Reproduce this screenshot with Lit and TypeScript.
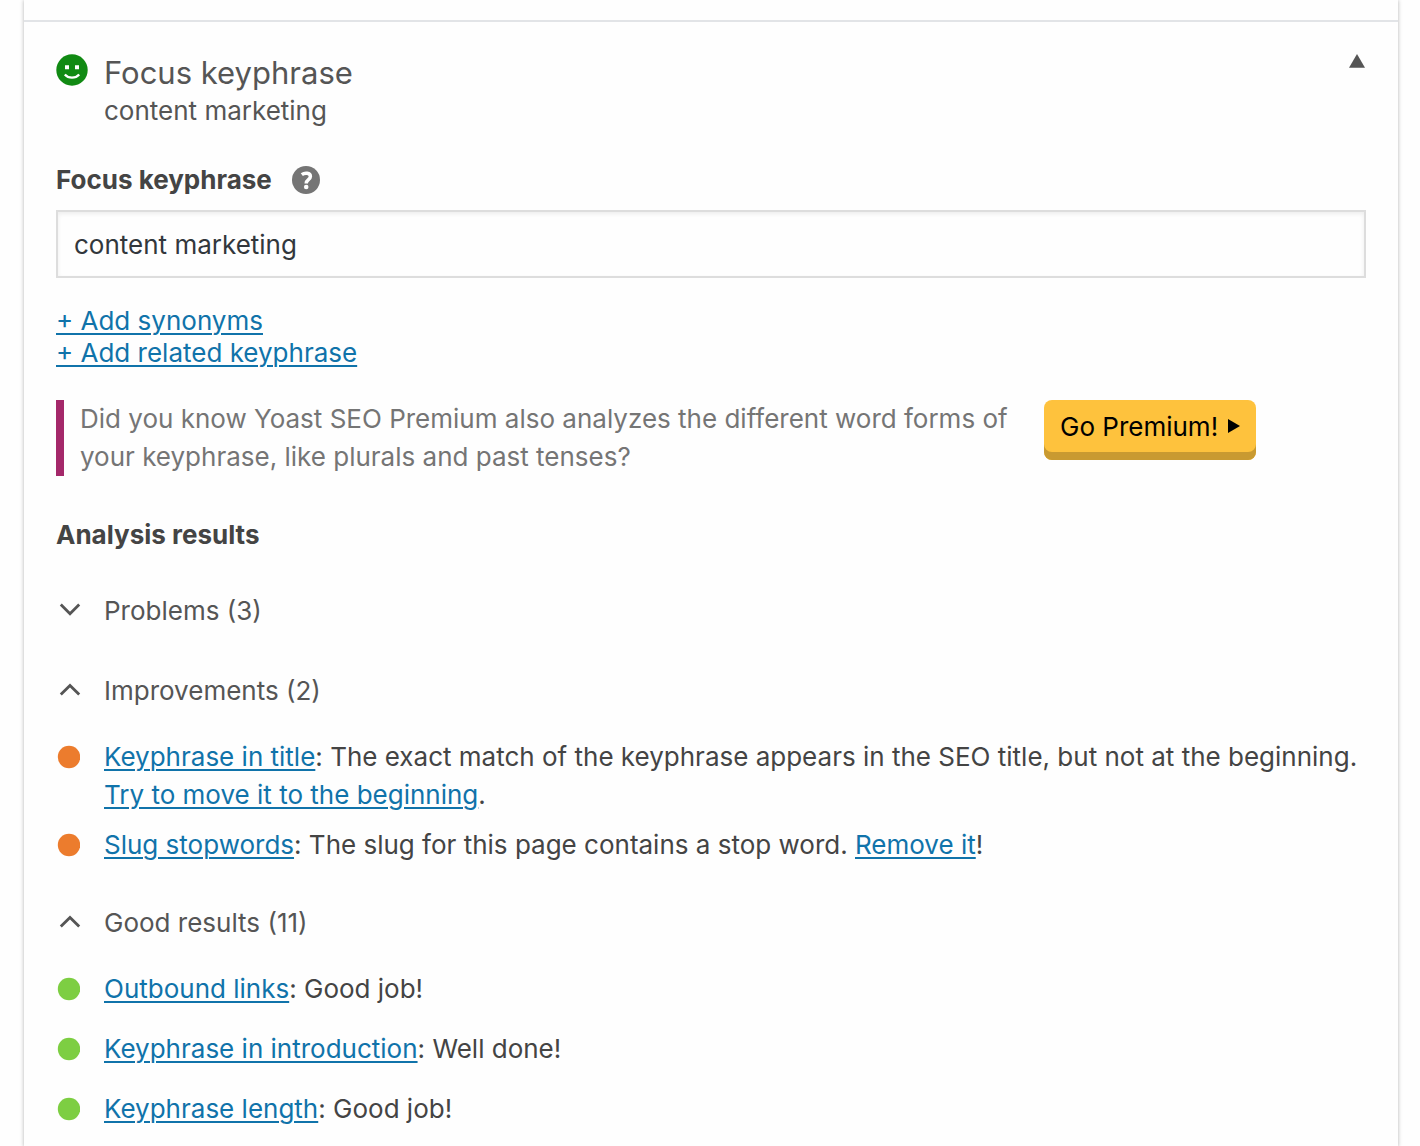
import { LitElement, html, css, svg, type TemplateResult } from "lit";
import { customElement, property, state } from "lit/decorators.js";
import { classMap } from "lit/directives/class-map.js";

interface Result {
  name: string;
  text: string;
  action?: string;
  end?: string;
}

const IMPROVEMENTS: Result[] = [
  {
    name: "Keyphrase in title",
    text: "The exact match of the keyphrase appears in the SEO title, but not at the beginning.",
    action: "Try to move it to the beginning",
    end: ".",
  },
  {
    name: "Slug stopwords",
    text: "The slug for this page contains a stop word.",
    action: "Remove it",
    end: "!",
  },
];

const GOOD: Result[] = [
  { name: "Outbound links", text: "Good job!" },
  { name: "Keyphrase in introduction", text: "Well done!" },
  { name: "Keyphrase length", text: "Good job!" },
];

const base = css`
  :host {
    display: block;
  }
  * {
    box-sizing: border-box;
  }
  button {
    margin: 0;
    padding: 0;
    border: 0;
    background: none;
    color: inherit;
    font: inherit;
    text-align: left;
    cursor: pointer;
  }
  a {
    color: #1073aa;
    text-decoration: underline;
    text-decoration-thickness: 2px;
    text-underline-offset: 3px;
  }
  ul {
    margin: 0;
    padding: 0;
    list-style: none;
  }
`;

@customElement("result-group")
export class ResultGroup extends LitElement {
  @property() label = "";
  @property() tone = "good";
  @property({ type: Number }) count = 0;
  @property({ type: Boolean }) open = false;
  @property({ attribute: false }) results: Result[] = [];

  static styles = [
    base,
    css`
      .toggle {
        display: flex;
        align-items: center;
        gap: 20px;
        width: 100%;
        min-height: 80px;
        color: #555;
      }
      .chevron {
        flex: none;
        width: 28px;
        height: 28px;
      }
      .list {
        display: grid;
        gap: 12px;
        padding: 7px 0 9px;
      }
      .item {
        display: flex;
        gap: 24px;
        min-height: 48px;
        line-height: 38px;
      }
      .dot {
        flex: none;
        width: 24px;
        height: 38px;
      }
      .good {
        fill: #7dce42;
      }
      .ok {
        fill: #ec7c2d;
      }
      .text {
        margin: 0;
      }
    `,
  ];

  private flip() {
    this.open = !this.open;
  }

  render() {
    return html`
      <button class="toggle" aria-expanded=${this.open} @click=${this.flip}>
        <svg class="chevron" viewBox="0 0 28 28" fill="none" stroke="#555" stroke-width="2.8" aria-hidden="true">
          ${this.open ? svg`<path d="M4.800 17.600 14 8.400l9.200 9.200" />` : svg`<path d="M4.800 7.500 14 16.700 23.200 7.500" />`}
        </svg>
        <span>${this.label} (${this.count})</span>
      </button>
      ${this.open
        ? html`<ul class="list">
            ${this.results.map((r) => this.row(r))}
          </ul>`
        : ""}
    `;
  }

  private row(r: Result): TemplateResult {
    return html`<li class="item">
      <svg class=${classMap({ dot: true, good: this.tone === "good", ok: this.tone === "ok" })} viewBox="0 0 24 38" aria-hidden="true">
        <circle cx="13" cy="19" r="11.200" />
      </svg>
      <p class="text"><a href="#">${r.name}</a>: ${r.text}${r.action ? html` <a href="#">${r.action}</a>${r.end}` : ""}</p>
    </li>`;
  }
}

@customElement("app-root")
export class AppRoot extends LitElement {
  @state() private open = true;
  @state() private keyphrase = "content marketing";

  static styles = [
    base,
    css`
      :host {
        height: 100vh;
        overflow: hidden;
        background: #fefefe;
        color: #444;
        font: 26px/32px Inter, "Liberation Sans", sans-serif;
      }
      .panel {
        min-height: 100vh;
        margin: 0 22px 0 24px;
        padding-top: 20px;
        background: #fefefe;
        box-shadow: 0 0 4px rgba(0, 0, 0, 0.3);
      }
      .section {
        padding: 29px 32px 0;
        border-top: 2px solid #e2e4e7;
      }
      .header {
        display: flex;
        align-items: flex-start;
        gap: 16px;
        width: 100%;
        color: #555;
      }
      .face {
        flex: none;
        width: 32px;
        height: 36px;
      }
      .titles {
        flex: 1;
        display: grid;
      }
      .title {
        font-size: 31px;
        line-height: 44px;
      }
      .arrow {
        flex: none;
        width: 18px;
        height: 20px;
      }
      .labels {
        display: flex;
        align-items: center;
        gap: 20px;
        margin-top: 35px;
        height: 36px;
      }
      .label,
      .heading {
        margin: 0;
        font-size: 26px;
        font-weight: 700;
      }
      .help {
        display: grid;
      }
      .help svg {
        width: 28px;
        height: 28px;
      }
      .input {
        display: block;
        width: 100%;
        height: 68px;
        margin-top: 12px;
        padding: 0 16px;
        border: 2px solid #ddd;
        border-radius: 0;
        outline: 0;
        background: #fefefe;
        box-shadow: inset 0 2px 4px rgba(0, 0, 0, 0.07);
        color: #32373c;
        font: inherit;
      }
      .links {
        display: grid;
        justify-items: start;
        margin-top: 27px;
      }
      .upsell {
        display: flex;
        align-items: flex-start;
        gap: 24px;
        max-width: 1200px;
        margin-top: 31px;
      }
      .note {
        flex: 1;
        margin: 0;
        padding-left: 16px;
        border-left: 8px solid #a4286a;
        color: #757575;
        line-height: 38px;
      }
      .premium {
        display: flex;
        align-items: center;
        justify-content: space-between;
        flex: none;
        width: 212px;
        height: 60px;
        padding: 0 16px 6px;
        border-radius: 8px;
        background: #fec23d;
        box-shadow: inset 0 -8px 0 #c99a31;
        color: #000;
        text-decoration: none;
      }
      .premium svg {
        width: 12px;
        height: 16px;
      }
      .heading {
        margin-top: 43px;
        margin-bottom: 20px;
      }
    `,
  ];

  private flip() {
    this.open = !this.open;
  }

  private edit(e: Event) {
    this.keyphrase = (e.target as HTMLInputElement).value;
  }

  render() {
    return html`
      <main class="panel">
        <section class="section">
          <button class="header" aria-expanded=${this.open} @click=${this.flip}>
            <svg class="face" viewBox="0 0 32 36" aria-hidden="true">
              <circle cx="16" cy="19" r="15.700" fill="#118a13" />
              <path d="M9 14.200h4v4H9zM19 14.200h4v4h-4z" fill="#fff" />
              <path d="M8.800 23.500c3.600 4.200 10.800 4.200 14.400 0" fill="none" stroke="#fff" stroke-width="2.200" />
            </svg>
            <span class="titles">
              <span class="title">Focus keyphrase</span>
              <span>${this.keyphrase}</span>
            </span>
            <svg class="arrow" viewBox="0 0 18 20" aria-hidden="true">
              <path d="M9 3 17 16.700H1z" fill="#555" />
            </svg>
          </button>
          ${this.open ? this.body() : ""}
        </section>
      </main>
    `;
  }

  private body(): TemplateResult {
    return html`
      <div class="labels">
        <label class="label" for="keyphrase">Focus keyphrase</label>
        <button class="help" aria-label="Help">
          <svg viewBox="0 0 28 28" aria-hidden="true">
            <circle cx="14" cy="14" r="14" fill="#757575" />
            <path d="M9.800 8.600c2.900-2.200 8.600-2 8.600 1.900 0 3.300-4.200 2.900-4.200 6.900" fill="none" stroke="#fff" stroke-width="3.500" />
            <circle cx="14.200" cy="21" r="2.300" fill="#fff" />
          </svg>
        </button>
      </div>
      <input class="input" id="keyphrase" type="text" .value=${this.keyphrase} @input=${this.edit} />
      <div class="links">
        <a href="#">+ Add synonyms</a>
        <a href="#">+ Add related keyphrase</a>
      </div>
      <div class="upsell">
        <p class="note">
          Did you know Yoast SEO Premium also analyzes the different word forms of your keyphrase, like plurals and past
          tenses?
        </p>
        <a class="premium" href="#">
          <span>Go Premium!</span>
          <svg viewBox="0 0 12 16" aria-hidden="true"><path d="M0 0 12 7 0 14z" /></svg>
        </a>
      </div>
      <h2 class="heading">Analysis results</h2>
      <result-group label="Problems" .count=${3}></result-group>
      <result-group label="Improvements" .count=${2} tone="ok" open .results=${IMPROVEMENTS}></result-group>
      <result-group label="Good results" .count=${11} open .results=${GOOD}></result-group>
    `;
  }
}
